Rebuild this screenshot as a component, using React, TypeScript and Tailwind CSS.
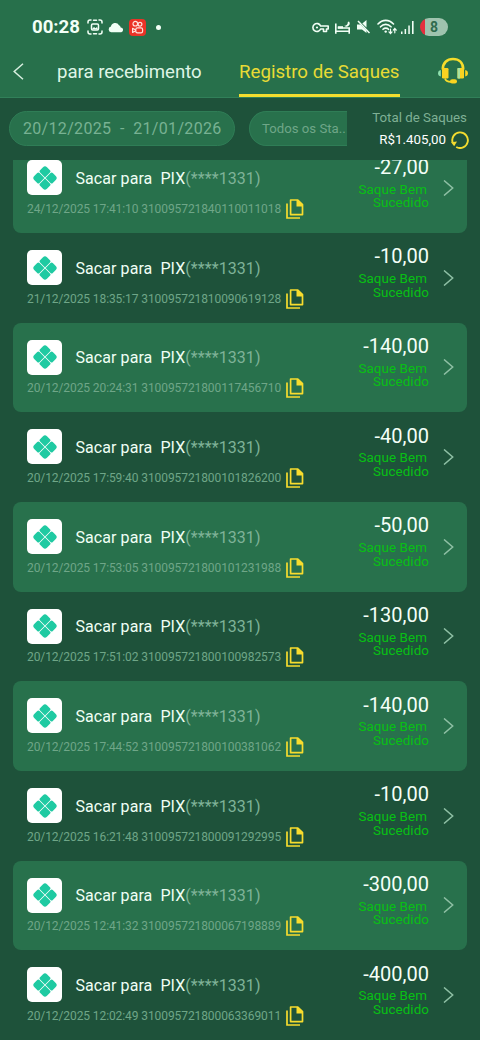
import { useState } from 'react'

type Withdrawal = {
  id: string
  date: string
  amount: string
}

const withdrawals: Withdrawal[] = [
  { date: '24/12/2025 17:41:10', id: '310095721840110011018', amount: '-27,00' },
  { date: '21/12/2025 18:35:17', id: '310095721810090619128', amount: '-10,00' },
  { date: '20/12/2025 20:24:31', id: '310095721800117456710', amount: '-140,00' },
  { date: '20/12/2025 17:59:40', id: '310095721800101826200', amount: '-40,00' },
  { date: '20/12/2025 17:53:05', id: '310095721800101231988', amount: '-50,00' },
  { date: '20/12/2025 17:51:02', id: '310095721800100982573', amount: '-130,00' },
  { date: '20/12/2025 17:44:52', id: '310095721800100381062', amount: '-140,00' },
  { date: '20/12/2025 16:21:48', id: '310095721800091292995', amount: '-10,00' },
  { date: '20/12/2025 12:41:32', id: '310095721800067198889', amount: '-300,00' },
  { date: '20/12/2025 12:02:49', id: '310095721800063369011', amount: '-400,00' },
]

function StatusBar() {
  return (
    <div className="flex h-[54px] items-center pl-8 pr-8 text-[#f2fff6]">
      <span className="w-[48px] whitespace-nowrap text-[18.6px] font-bold leading-none">00:28</span>
      <svg className="ml-[7px] h-4 w-4" viewBox="0 0 16 16" fill="none" stroke="currentColor" strokeWidth="1.5" strokeLinecap="round">
        <path d="M1 4V3a2 2 0 0 1 2-2h1M12 1h1a2 2 0 0 1 2 2v1M15 12v1a2 2 0 0 1-2 2h-1M4 15H3a2 2 0 0 1-2-2v-1M6.5 1.2h3M6.5 14.8h3" />
        <rect x="4.5" y="5" width="7" height="6" rx="1.2" />
        <path d="m5 10 2-2 1.5 1.2L10 8l1 2.5z" fill="currentColor" stroke="none" />
      </svg>
      <svg className="ml-[5px] h-[11px] w-4" viewBox="0 0 16 11" fill="currentColor">
        <path d="M3.2 10.3a2.9 2.9 0 0 1-.3-5.7A4.3 4.3 0 0 1 11 3.3a3 3 0 0 1 1.7 2.1 2.5 2.5 0 0 1 .6 4.9z" />
      </svg>
      <svg className="ml-[5px] h-[17px] w-[17px]" viewBox="0 0 17 17" fill="none" stroke="#ffe3dc" strokeWidth="1.2">
        <rect width="17" height="17" rx="4" fill="#ea3327" stroke="none" />
        <circle cx="6.3" cy="4.7" r="2.3" />
        <circle cx="11" cy="5.2" r="1.9" />
        <rect x="6.8" y="8.8" width="6.8" height="5" rx="1.6" />
        <path d="M6.8 11 3.6 9.3v4.2l3.2-1.7" strokeLinejoin="round" />
      </svg>
      <span className="ml-[10px] h-[5px] w-[5px] rounded-full bg-current" />

      <div className="ml-auto flex items-center">
        <svg className="h-[11px] w-[17px]" viewBox="0 0 17 11" fill="none" stroke="currentColor" strokeWidth="1.6">
          <path d="M8.6 4A4 4 0 1 0 8.6 7H11.5V9.5H14.5V7H16.2V4Z" strokeLinejoin="round" />
          <circle cx="5" cy="5.5" r="1.1" fill="currentColor" stroke="none" />
        </svg>
        <svg className="ml-[6px] h-[14px] w-[15px]" viewBox="0 0 15 14" fill="none" stroke="currentColor" strokeWidth="1.6">
          <path d="M.8 3.5V13.8M.8 11.3H14.2M14.2 13.8V8H2.8" />
          <path d="M2.8 6.2H8V8.5H2.8z" fill="currentColor" stroke="none" />
          <path d="M14 1.5a3.2 3.2 0 0 1-4.8 4.2c2.2.2 3.8-1.2 3.6-3.8z" fill="currentColor" stroke="none" />
        </svg>
        <svg className="ml-[7px] h-[14px] w-[13px]" viewBox="0 0 13 14" fill="currentColor">
          <path d="M9.5 0v7.5L5.3 3.5zM0 4.5h3.3l6.2 6.2V13L5 9.5H0z" />
          <path d="m1 1 11.5 12" stroke="currentColor" strokeWidth="1.5" />
        </svg>
        <svg className="ml-[7px] h-4 w-5" viewBox="0 0 20 16" fill="none" stroke="currentColor" strokeWidth="1.6" strokeLinecap="round">
          <path d="M1 5c4.5-4.8 11-4.8 15.5 0M3.5 7.8c3-3.2 7.5-3.2 10.5 0M6 10.3c1.6-1.6 4-1.6 5.5 0" />
          <circle cx="8.7" cy="12.6" r="1.2" fill="currentColor" stroke="none" />
          <path d="M13.5 10.2v4M12 12.9l1.5 1.6 1.5-1.6M17.8 13.8v-4M16.3 11.1l1.5-1.6 1.5 1.6" strokeWidth="1.2" />
        </svg>
        <svg className="ml-[4px] h-[13px] w-[13px]" viewBox="0 0 13 13" fill="currentColor">
          <path d="M0 10.5h1.5V13H0zM3.6 8h1.5v5H3.6zM7.3 4.5h1.5V13H7.3zM11 0h1.6v13H11z" />
        </svg>
        <span className="ml-[6px] flex h-[18px] w-7 items-center justify-center rounded-full bg-[linear-gradient(90deg,#e52e3d_0_5px,#9fc3ae_5px)] text-[14px] font-bold leading-none text-[#2f6b4d]">
          8
        </span>
      </div>
    </div>
  )
}

function HeadsetIcon() {
  return (
    <svg className="h-7 w-8 shrink-0" viewBox="0 0 32 28" fill="none">
      <path d="M5.8 12.5C5.8 5.8 10 2 16 2s10.2 3.8 10.2 10.5" stroke="#f5dc2b" strokeWidth="2.6" />
      <rect x="5" y="11" width="6.5" height="10.5" rx="1.2" fill="#fad321" />
      <rect x="20.5" y="11" width="6.5" height="10.5" rx="1.2" fill="#fad321" />
      <path d="M20.5 11h2.5v10.5h-2.5z" fill="#a9e3a0" />
      <path d="M3.8 13v6.5a3.3 3.3 0 0 1 0-6.5z" fill="#8fe0ae" />
      <path d="M28.2 13v6.5a3.3 3.3 0 0 0 0-6.5z" fill="#fad321" />
      <path d="M8 21.5c.8 2.8 3 3.4 6 3.4" stroke="#f5dc2b" strokeWidth="1.8" />
      <rect x="13" y="22.2" width="7" height="4.3" rx="2.1" fill="#fad321" />
    </svg>
  )
}

function RefreshIcon() {
  return (
    <svg className="ml-[5px] h-[18px] w-[18px]" viewBox="0 0 18 18" fill="none" stroke="#f3dc2f" strokeWidth="1.9">
      <path d="M1.6 11.5A7.8 7.8 0 1 1 5.2 16" />
      <path d="M0 11.2 6 10.6 3.2 15.3z" fill="#f3dc2f" stroke="none" />
    </svg>
  )
}

function PixLogo() {
  // one petal, repeated on each side of the diamond
  const petal = 'M.4.4H7.4a1.6 1.6 0 0 1 1.6 1.6V6.2A2.8 2.8 0 0 1 6.2 9H2A1.6 1.6 0 0 1 .4 7.4z'
  return (
    <div className="flex h-[35px] w-[35px] items-center justify-center rounded-[5px] bg-white">
      <svg className="h-6 w-6" viewBox="-12 -12 24 24" fill="#1fcaa2">
        <path d={petal} transform="rotate(45)" />
        <path d={petal} transform="rotate(135)" />
        <path d={petal} transform="rotate(225)" />
        <path d={petal} transform="rotate(315)" />
      </svg>
    </div>
  )
}

function CopyIcon() {
  return (
    <svg className="h-5 w-[18px]" viewBox="0 0 18 20" fill="none" stroke="#f7dc2e" strokeWidth="1.7">
      <path d="M1 4.5V19H14" />
      <path d="M4.6 1H11.8L16.5 5.7V15.6H4.6z" strokeLinejoin="round" />
      <path d="M10.5 1h1.5l4.8 4.8v1.7H10.5z" fill="#f7dc2e" stroke="none" />
    </svg>
  )
}

function WithdrawalRow({ item, shaded }: { item: Withdrawal; shaded: boolean }) {
  return (
    <div className={`flex h-[89.67px] shrink-0 rounded-[8px] pl-[14px] pr-[13px] ${shaded ? 'bg-[#28714c]' : ''}`}>
      <div className="flex flex-col pt-[16.6px]">
        <div className="flex items-center">
          <PixLogo />
          <p className="ml-[13.5px] whitespace-pre pt-px text-[16px] leading-[35px] tracking-[0.07px] text-[#f0fff5]">
            Sacar para{'  '}PIX<span className="text-[#7fb398]">(****1331)</span>
          </p>
        </div>
        <div className="mt-[3px] flex items-center">
          <span className="w-[259px] whitespace-nowrap text-[12px] leading-5 tracking-[-0.09px] text-[#6fa688]">
            {item.date} {item.id}
          </span>
          <button type="button" aria-label="Copiar">
            <CopyIcon />
          </button>
        </div>
      </div>
      <div className="ml-auto flex w-[90px] flex-col items-end pt-[11.4px]">
        <span className="text-[20px] leading-6 text-[#f4fff8]">{item.amount}</span>
        <span className="mt-[3.8px] whitespace-nowrap pr-[2px] text-[13.4px] leading-[13.5px] tracking-[0.08px] text-[#08c014]">Saque Bem</span>
        <span className="text-[13.4px] leading-[13.5px] tracking-[0.08px] text-[#08c014]">Sucedido</span>
      </div>
      <svg className="ml-[14px] h-4 w-[11px] self-center" viewBox="0 0 11 16" fill="none" stroke="#8fc0a5" strokeWidth="1.5">
        <path d="m1 .5 8.7 7.5L1 15.5" />
      </svg>
    </div>
  )
}

export default function App() {
  const [status] = useState('Todos os Sta..')

  return (
    <main className="flex h-[1040px] w-[480px] flex-col overflow-hidden bg-[#1e523a] font-['Roboto',sans-serif]">
      <header className="h-[98px] shrink-0 border-b border-[#318059] bg-[#27704b]">
        <StatusBar />
        <nav className="flex h-[43px] pl-[13px] pr-[11px]">
          <button type="button" aria-label="Voltar" className="mt-[9px] h-[17px] w-[11px]">
            <svg className="h-[17px] w-[11px]" viewBox="0 0 11 17" fill="none" stroke="#d8efe0" strokeWidth="1.5">
              <path d="M10 .7 1.2 8.5 10 16.3" />
            </svg>
          </button>
          <span className="ml-[33px] w-[145px] whitespace-nowrap pt-[6px] text-[18.6px] leading-6 text-[#dff5e6]">
            para recebimento
          </span>
          <span className="ml-[37px] w-[161px] whitespace-nowrap border-b-[3px] border-[#f3dd2f] pt-[6px] text-[18.7px] leading-6 text-[#e8db35]">
            Registro de Saques
          </span>
          <div className="ml-auto pt-[3px]">
            <HeadsetIcon />
          </div>
        </nav>
      </header>

      <section className="flex h-[62px] shrink-0 pl-[9px] pr-[11px]">
        <div className="mt-[13px] flex h-[35px] w-[226px] items-center whitespace-pre rounded-full border border-[#2f7d56] bg-[#28714c] pl-[13px] pt-px text-[16px] tracking-[0.32px] text-[#78b293]">
          20/12/2025{'  '}-{'  '}21/01/2026
        </div>
        <div className="ml-[14px] mt-[13px] flex h-[35px] w-[98px] items-center whitespace-nowrap rounded-l-full border border-r-0 border-[#2f7d56] bg-[#28714c] pl-[12px] pt-px text-[13.2px] text-[#6fa688]">
          {status}
        </div>
        <div className="ml-auto flex flex-col items-end pt-[12px]">
          <span className="pr-[2px] text-[13.3px] leading-4 text-[#7fb095]">Total de Saques</span>
          <div className="mt-[4px] flex items-center text-[13.3px] leading-5 text-white">
            R$1.405,00
            <RefreshIcon />
          </div>
        </div>
      </section>

      <section className="flex-1 overflow-hidden px-[13px]">
        <div className="-mt-[16.7px] flex flex-col">
          {withdrawals.map((item, i) => (
            <WithdrawalRow key={item.id} item={item} shaded={i % 2 === 0} />
          ))}
        </div>
      </section>
    </main>
  )
}
